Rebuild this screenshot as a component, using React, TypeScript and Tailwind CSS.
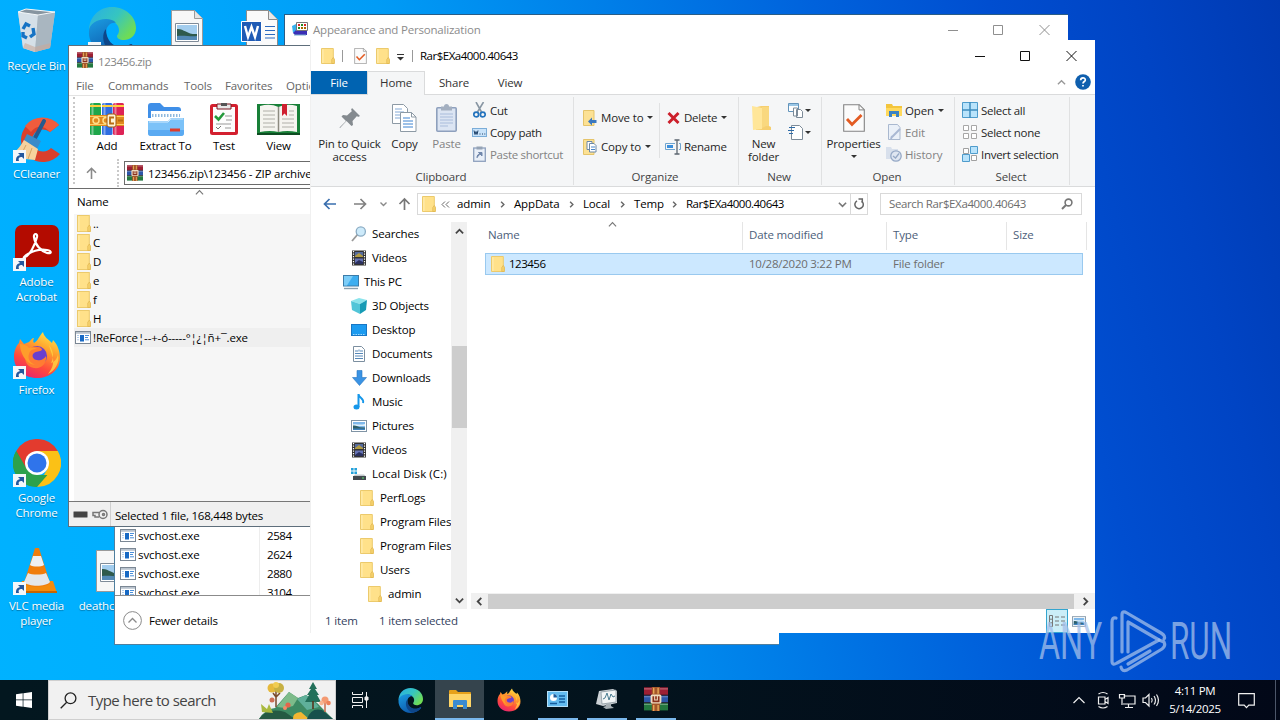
import type { ReactNode } from "react";

/* ---------- Small shared icons ---------- */

function Folder({ className = "w-[14px] h-4" }: { className?: string }) {
  return (
    <svg className={`shrink-0 ${className}`} viewBox="0 0 14 16" preserveAspectRatio="none">
      <path d="M.5.5h11.8v11h.9v4H.5z" fill="#ffe18a" stroke="#ecca6c" />
      <path d="M10.8 11.500l1.500-2 1 1.500v4.500h-2.500z" fill="#f7d470" stroke="#dfb34c" strokeWidth=".7" />
      <path d="M1.300 1.200h1.200v13.800H1.300z" fill="#ffedb0" />
    </svg>
  );
}

function Books({ className }: { className: string }) {
  return (
    <svg className={`shrink-0 ${className}`} viewBox="0 0 16 16">
      <rect width="16" height="5.2" y=".2" fill="#9c1f33" />
      <rect width="16" height="5" y="5.5" fill="#2c56a8" />
      <rect width="16" height="5" y="10.6" fill="#23783f" />
      <path d="M0 1.200h16M0 6.500h16M0 11.600h16" stroke="#fff" strokeOpacity=".3" strokeWidth=".8" />
      <path d="M0 5.400h16M0 10.500h16" stroke="#2b1720" strokeWidth=".6" />
      <rect x="5.2" width="5.4" height="16" fill="#a4562b" />
      <path d="M6.500 .5v4M9.400 .5v4M6.500 12v4M9.400 12v4" stroke="#f2b760" strokeWidth=".8" />
      <rect x="4.4" y="5" width="7.2" height="6" rx="1" fill="#f0dcc0" />
      <path d="M6.200 6.200v3.400h3.600V6.200M8 6.200v2.200" stroke="#8a2f1b" strokeWidth="1.100" fill="none" />
    </svg>
  );
}

function ExeIcon() {
  return (
    <svg className="w-4 h-[13px] shrink-0" viewBox="0 0 16 13">
      <rect x=".5" y=".5" width="15" height="12" fill="#fff" stroke="#7b8794" />
      <path d="M1 1h14v1.800H1z" fill="#b9c3ce" />
      <rect x="5" y="4" width="4" height="6.5" fill="#1769c4" />
      <path d="M10 4.500h4M10 6.500h3M10 8.800h4" stroke="#4b8fd9" />
      <path d="M2 4.500h2M2 6.500h2M2 8.800h2" stroke="#b3cfee" />
    </svg>
  );
}

function PictureIcon({ className = "w-4 h-3" }: { className?: string }) {
  return (
    <svg className={`shrink-0 ${className}`} viewBox="0 0 16 12">
      <rect x=".5" y=".5" width="15" height="11" fill="#fff" stroke="#8094a5" />
      <path d="M2 2h12v8H2z" fill="#7fb8ea" />
      <path d="M2 4.500c3-1 6 1 12-.500v2H2z" fill="#dff0fb" />
      <path d="M2 5.600c3-.600 5 1.200 7 1.600l5 .400V10H2z" fill="#2e5f68" />
      <path d="M2 8.500h12V10H2z" fill="#3f82bd" />
    </svg>
  );
}

function Caret() {
  return (
    <svg className="w-[6px] h-[3px] shrink-0" viewBox="0 0 6 3">
      <path d="M0 0h6L3 3z" fill="#333" />
    </svg>
  );
}

function Chevron({ d, className, color = "#777", width = 1.3 }: { d: string; className: string; color?: string; width?: number }) {
  return (
    <svg className={`shrink-0 ${className}`} viewBox="0 0 10 10" fill="none" stroke={color} strokeWidth={width}>
      <path d={d} />
    </svg>
  );
}

const UP = "M1 7l4-4 4 4";
const DOWN = "M1 3l4 4 4-4";
const LEFT = "M7 1L3 5l4 4";
const RIGHT = "M3 1l4 4-4 4";

/* ---------- App logos ---------- */

function EdgeLogo({ className }: { className: string }) {
  return (
    <svg className={`shrink-0 ${className}`} viewBox="0 0 48 48">
      <defs>
        <linearGradient id="edgeTop" x1="0" y1="0" x2="1" y2=".6">
          <stop offset="0" stopColor="#28aee6" />
          <stop offset=".55" stopColor="#36c5c0" />
          <stop offset="1" stopColor="#6fdc55" />
        </linearGradient>
        <linearGradient id="edgeBody" x1="0" y1="0" x2=".6" y2="1">
          <stop offset="0" stopColor="#1b9de2" />
          <stop offset="1" stopColor="#0c55a8" />
        </linearGradient>
      </defs>
      <path d="M1 24C1 10 11 0 24 0c14 0 24 10 24 21 0 8-6 12-12 12-5 0-7-2-7-4 0-1 2-2 2-6 0-5-5-10-12-10C9 13 2 19 1 24z" fill="url(#edgeTop)" />
      <path d="M1 24c0-7 8-12 17-12 4 0 8 1 10 4-6-1-10 4-10 10 0 8 7 14 15 14 5 0 8-2 10-3 1 0 2 1 1 2-5 6-12 9-20 9C11 48 0 37 1 24z" fill="url(#edgeBody)" />
      <path d="M18 22c-4 4-4 14 2 20 3 4 7 5 9 5 7-1 12-4 15-8 1-1 0-2-1-2-4 2-7 3-10 3-8 0-15-7-15-18z" fill="#0e4689" />
    </svg>
  );
}

function FirefoxLogo({ className }: { className: string }) {
  return (
    <svg className={`shrink-0 ${className}`} viewBox="0 0 48 48">
      <defs>
        <linearGradient id="foxBody" x1=".8" y1="0" x2=".3" y2="1">
          <stop offset="0" stopColor="#ffe94a" />
          <stop offset=".35" stopColor="#ffa02c" />
          <stop offset=".7" stopColor="#ff4a3c" />
          <stop offset="1" stopColor="#e8246f" />
        </linearGradient>
      </defs>
      <path d="M30 1c1 5 5 7 9 11l1-3c5 5 7 12 7 18 0 12-10 20-23 20S1 38 1 26c0-6 2-11 5-14l1-4 4 5 5-2c2-2 3-4 5-4-1 2-1 4 0 5 4-2 5-7 9-11z" fill="url(#foxBody)" />
      <circle cx="24" cy="25" r="10" fill="#6a3fd0" />
      <path d="M14 20c3-4 8-5 11-4 3 0 4 2 4 3-2 2-6 1-8 3-3 2-1 7 3 7 4 1 7-1 9-4 1 8-5 13-12 12-8-1-11-9-7-17z" fill="#ff7c32" />
      <path d="M7 13c3 0 7 1 9 4 3-1 6 0 8 1-4 0-7 1-8 5-2 5 2 10 7 11-9 0-16-11-16-21z" fill="#ff9d2b" />
      <path d="M36 14c5 6 5 13 2 18 3-1 6-4 7-8 2 7-3 16-10 19 4-5 6-10 5-16z" fill="#ffd443" fillOpacity=".8" />
    </svg>
  );
}

function ChromeLogo() {
  return (
    <svg className="w-12 h-12" viewBox="0 0 48 48">
      <path d="M24 24L3.200 12A24 24 0 0 1 44.800 12z" fill="#e33b2e" />
      <path d="M24 24h-6L3.200 12A24 24 0 0 0 24 48z" fill="#2da14c" />
      <path d="M24 12h20.800A24 24 0 0 1 24 48l10.400-18z" fill="#fbc116" />
      <path d="M3.200 12L13.600 30 24 12z" fill="#e33b2e" />
      <path d="M13.600 30L24 36h10.400L24 48A24 24 0 0 1 3.200 12z" fill="#2da14c" />
      <circle cx="24" cy="24" r="12" fill="#fff" />
      <circle cx="24" cy="24" r="9.500" fill="#2f74eb" />
    </svg>
  );
}

function RecycleBin() {
  return (
    <svg className="w-12 h-12" viewBox="0 0 48 48">
      <path d="M5 5l8-3 29 3-5 36-15 4-12-4z" fill="#b7c6d1" />
      <path d="M5 5l20 3-3 37-12-4z" fill="#d5e0e8" />
      <path d="M25 8l17-3-5 36-15 4z" fill="#a9b6c0" />
      <path d="M5 5l8-3 29 3-17 3z" fill="#8795a0" stroke="#f4f8fa" />
      <path d="M12 36l10 4 16-4-1 5-15 4-12-4z" fill="#c9a999" fillOpacity=".6" />
      <g fill="none" stroke="#1673c4" strokeWidth="3.400">
        <path d="M10 22l3-5 4 2" />
        <path d="M20 21l1 6-4 3" />
        <path d="M14 31l-4-2v-4" />
      </g>
    </svg>
  );
}

function CCleanerLogo() {
  return (
    <svg className="w-12 h-12" viewBox="0 0 48 48">
      <path d="M46 10A22 22 0 1 0 47 39l-9-6a11 11 0 1 1-1-16z" fill="#d93f2c" />
      <path d="M46 10A22 22 0 0 0 12 11l6 6c5-7 13-7 19 0z" fill="#f05c3d" />
      <path d="M31 6L22 23" stroke="#255a8e" strokeWidth="4" strokeLinecap="round" />
      <path d="M14 19l14 7-4 8-14-7z" fill="#3a8bc9" />
      <path d="M11 25l14 9-3 11-10-1-12-6c5-3 8-8 11-13z" fill="#f6d29e" />
      <path d="M13 30L8 40M19 33l-4 11" stroke="#d6a463" />
    </svg>
  );
}

function AcrobatLogo() {
  return (
    <svg className="w-12 h-12" viewBox="0 0 48 48">
      <rect x="2" y="2" width="44" height="42" rx="7" fill="#b30b00" />
      <path d="M12 34c5-2 10-12 12-20 .8-4-3.500-4-3 0 1 8 7 14 13 16 5 1 5-2 0-3-6-1-14 1-19 4-5 3-5 5-3 3z" fill="none" stroke="#fff" strokeWidth="2.200" />
    </svg>
  );
}

function VlcLogo() {
  return (
    <svg className="w-12 h-12" viewBox="0 0 48 48">
      <path d="M9 34h31l4 12H6z" fill="#f48b0c" />
      <path d="M6 44h38v2H6z" fill="#c96500" />
      <path d="M22 1h4l11 35c-3 5-23 5-26 0z" fill="#f07d0b" />
      <path d="M20 9h8l3 9c-3 2-11 2-14 0z" fill="#eef0f2" />
      <path d="M15 26c4 2 14 2 18 0l4 9c-4 5-22 5-26 0z" fill="#e4e7ea" />
    </svg>
  );
}

function DocPicture() {
  return (
    <svg className="w-12 h-12" viewBox="0 0 48 48">
      <path d="M8.500 3.500h23l8 8v33h-31z" fill="#f7f7f7" stroke="#9a9a9a" />
      <path d="M31.500 3.500v8h8" fill="#e4e4e4" stroke="#9a9a9a" />
      <path d="M12.500 16.500h23v18h-23z" fill="#fff" stroke="#7f8b98" />
      <path d="M14 18h20v15H14z" fill="#a3cdee" />
      <path d="M14 22c6-1 11 6 20 5v6H14z" fill="#2f5a4c" />
      <path d="M14 29c7-1 14 1 20 0v4H14z" fill="#5389b5" />
    </svg>
  );
}

function WordDoc() {
  return (
    <svg className="w-12 h-12" viewBox="0 0 48 48">
      <path d="M8.500 3.500h22l9 9v33h-31z" fill="#fafafa" stroke="#8b8b8b" />
      <path d="M30.500 3.500v9h9" fill="#e8e8e8" stroke="#8b8b8b" />
      <path d="M27 19.500h10M27 23.500h10M27 27.500h10M27 31h10" stroke="#2c6bc0" />
      <path d="M3.500 14.500h20v20h-20z" fill="#1f5bb5" stroke="#fff" />
      <path d="M7 19l3 11 3.500-10L17 30l3-11" fill="none" stroke="#fff" strokeWidth="2.400" />
    </svg>
  );
}

function ControlPanelIcon() {
  return (
    <svg className="w-4 h-4 shrink-0 mb-[2px]" viewBox="0 0 16 16">
      <path d="M0 5l4-2v8l-3 1z" fill="#37b1ee" />
      <path d="M1 12l4-4h10v6H3z" fill="#3a2fb5" />
      <path d="M4.500 1.500h11v8h-11z" fill="#fff" stroke="#777" />
      <path d="M6 3h2v2H6zM12 3h2v2h-2z" fill="#d22" />
      <path d="M9 3h2v2H9zM6 6h2v2H6z" fill="#282" />
      <path d="M9 6h2v2H9zM12 6h2v2h-2z" fill="#a60" />
      <path d="M2 14h12" stroke="#7ac" />
    </svg>
  );
}

/* ---------- Desktop ---------- */

function DesktopItem({ icon, label, shortcut }: { icon?: ReactNode; label?: string; shortcut?: boolean }) {
  return (
    <div className="h-[108px] w-[75px] pt-[7px] flex flex-col items-center">
      <div className="relative w-12 h-12">
        {icon}
        {shortcut && (
          <svg className="absolute left-0 bottom-0 w-[13px] h-[13px]" viewBox="0 0 13 13">
            <rect width="13" height="13" fill="#f4f7fa" />
            <path d="M3 11c0-4 1-5 4-6L5 3h6v6L9 7c-3 0-4 1-3 4z" fill="#24589e" />
          </svg>
        )}
      </div>
      <div className="mt-[3px] w-[68px] text-center text-white leading-[15px] whitespace-pre [text-shadow:0_1px_1px_rgba(0,0,0,0.35)] flex flex-col items-center">
        {label?.split("\n").map((line) => <span key={line}>{line}</span>)}
      </div>
    </div>
  );
}

function DesktopIcons() {
  return (
    <div className="absolute -left-px top-0 flex">
      <div>
        <DesktopItem icon={<RecycleBin />} label="Recycle Bin" />
        <DesktopItem icon={<CCleanerLogo />} label="CCleaner" shortcut />
        <DesktopItem icon={<AcrobatLogo />} label={"Adobe\nAcrobat"} shortcut />
        <DesktopItem icon={<FirefoxLogo className="w-12 h-12" />} label="Firefox" shortcut />
        <DesktopItem icon={<ChromeLogo />} label={"Google\nChrome"} shortcut />
        <DesktopItem icon={<VlcLogo />} label={"VLC media\nplayer"} shortcut />
      </div>
      <div>
        <DesktopItem icon={<EdgeLogo className="w-12 h-12" />} shortcut />
        <DesktopItem />
        <DesktopItem />
        <DesktopItem />
        <DesktopItem />
        <DesktopItem icon={<DocPicture />} label="deathcourse" />
      </div>
      <DesktopItem icon={<DocPicture />} />
      <DesktopItem icon={<WordDoc />} />
    </div>
  );
}

function WindowButtons({ color }: { color: string }) {
  return (
    <svg className="w-[138px] h-[30px] shrink-0" viewBox="0 0 138 30" fill="none" stroke={color}>
      <path d="M18 15.500h10M63.500 10.500h9v9h-9zM109.500 10l10 10M119.500 10l-10 10" />
    </svg>
  );
}

/* ---------- Background windows ---------- */

function PersonalizationWindow() {
  return (
    <div className="absolute left-[284px] top-[14px] w-[784px] h-[500px] bg-white border-t border-l border-[#2a5d86]">
      <div className="flex items-center h-[29px] pl-[7px]">
        <ControlPanelIcon />
        <span className="ml-[5px] flex-1 text-[#8c8c8c] tracking-[-0.19px]">Appearance and Personalization</span>
        <WindowButtons color="#8f8f8f" />
      </div>
    </div>
  );
}

const processes = ["2584", "2624", "2880", "3104"];

function TaskManagerWindow() {
  return (
    <div className="absolute left-[114px] top-[400px] w-[665px] h-[245px] bg-white border-l border-b border-[#4f7f9f] flex flex-col">
      <div className="h-[195px] pt-[126px] overflow-hidden">
        {processes.map((pid) => (
          <div key={pid} className="flex items-center h-[19px] pl-[5px]">
            <ExeIcon />
            <span className="ml-[2px] w-[122px] h-full leading-[19px] border-r border-[#ededed] tracking-[-0.05px]">svchost.exe</span>
            <span className="ml-[7px] tracking-[-0.4px]">{pid}</span>
          </div>
        ))}
      </div>
      <div className="flex-1 flex items-center border-t border-[#8b8b8b] pl-2">
        <svg className="w-[19px] h-[19px]" viewBox="0 0 19 19" fill="none">
          <circle cx="9.500" cy="9.500" r="8.900" stroke="#8a8a8a" />
          <path d="M5.500 11.500l4-4 4 4" stroke="#8a8a8a" strokeWidth="1.300" />
        </svg>
        <span className="ml-[7px]">Fewer details</span>
      </div>
    </div>
  );
}

/* ---------- WinRAR ---------- */

const archiveTools = [
  {
    label: "Add",
    width: "w-[58px]",
    icon: (
      <svg className="w-[34px] h-[34px]" viewBox="0 0 34 34">
        <rect y="1" width="11" height="32" rx="1.500" fill="#1ea64a" />
        <rect x="12" y="1" width="10.500" height="32" rx="1.500" fill="#2f6de0" />
        <rect x="23" y="1" width="11" height="32" rx="1.500" fill="#dd2356" />
        <path d="M2.500 1v32M14.500 1v32M25.500 1v32" stroke="#fff" strokeOpacity=".4" strokeWidth="2" />
        <path d="M0 4h11M12 4h10.500M23 4h11" stroke="#ffcf3d" strokeWidth="2" />
        <rect y="13" width="34" height="11" fill="#e08a1f" />
        <path d="M0 14.500h34M0 22.500h34" stroke="#ffd169" />
        <circle cx="6" cy="18.500" r="3" fill="none" stroke="#ffdf8c" strokeWidth="1.500" />
        <circle cx="16" cy="18.500" r="3" fill="none" stroke="#ffdf8c" strokeWidth="1.500" />
        <rect x="17" y="12" width="9" height="13" rx="2" fill="#fff4d6" stroke="#a15d12" />
        <path d="M24 15.500h-4v6h4M28 18.500h5" fill="none" stroke="#b86c12" strokeWidth="1.800" />
      </svg>
    ),
  },
  {
    label: "Extract To",
    width: "w-[59px]",
    icon: (
      <svg className="w-9 h-[34px]" viewBox="0 0 36 34">
        <path d="M0 4q0-3 3-3h9l4 4h14q3 0 3 3v8H0z" fill="#3f8fe8" />
        <rect x="3" y="9" width="30" height="13" fill="#fff" />
        <path d="M4 13.500h28" stroke="#90b9dd" strokeDasharray="1.500 1.500" strokeWidth="3" />
        <path d="M0 19h20l3-3h13v15q0 3-3 3H3q-3 0-3-3z" fill="#7cc2f8" />
        <path d="M0 28h36v3q0 3-3 3H3q-3 0-3-3z" fill="#5aaaf2" />
        <path d="M1 20h19l3-3h12" fill="none" stroke="#cfe9fd" />
        <rect x="22" y="26.500" width="10" height="3" fill="#dd3b2a" />
      </svg>
    ),
  },
  {
    label: "Test",
    width: "w-[58px]",
    icon: (
      <svg className="w-7 h-[34px]" viewBox="0 0 28 34">
        <rect y="2" width="28" height="31" rx="2.500" fill="#d3202f" />
        <path d="M3 5h22v25H3z" fill="#fdfdfd" />
        <path d="M7 2h14v5H7z" fill="#e8e8e8" stroke="#7b1620" />
        <path d="M11 1h6v3h-6z" fill="#555" />
        <path d="M5 14l3.500 3.500L14 11" fill="none" stroke="#249a3c" strokeWidth="2.600" />
        <path d="M15 14h7M16 18h6M6 22h15M15 26h6" stroke="#999" />
        <path d="M6 25l2 2 3-3" stroke="#777" fill="none" />
      </svg>
    ),
  },
  {
    label: "View",
    width: "w-[51px]",
    icon: (
      <svg className="w-[43px] h-[34px]" viewBox="0 0 43 34">
        <path d="M0 2h43v31H0z" fill="#188038" />
        <path d="M0 31h43v2H0z" fill="#0e4c22" />
        <path d="M3 4q10-3 18.500 1Q30 1 40 4v26q-10-2-18.500 0Q13 28 3 30z" fill="#f5f4ef" />
        <path d="M21.500 5v25" stroke="#8d8b80" strokeWidth="1.500" />
        <path d="M6 9h12M6 13h12M6 17h12M6 21h12M6 25h12M25 17h12M25 21h12M25 25h12M32 9h5M32 13h5" stroke="#b0afa8" />
        <path d="M25 2h5v12l-2.500-2.500L25 14z" fill="#cf2030" />
      </svg>
    ),
  },
];

const archiveRows = ["..", "C", "D", "e", "f", "H"];

function WinRarWindow() {
  return (
    <div className="absolute left-[68px] top-[45px] w-[400px] h-[482px] bg-white border border-[#5e6e7b] flex flex-col">
      <div className="flex items-center h-[30px] pl-2">
        <Books className="w-4 h-4 mb-[3px]" />
        <span className="ml-[5px] text-[#868686] tracking-[-0.45px]">123456.zip</span>
      </div>
      <div className="flex h-[20px] pl-[7px] items-center text-[#666] border-b border-[#e3e3e3] whitespace-nowrap">
        <span className="w-8">File</span>
        <span className="w-[76px]">Commands</span>
        <span className="w-[41px]">Tools</span>
        <span className="w-[61px]">Favorites</span>
        <span>Options</span>
      </div>
      <div className="flex h-[93px] pl-1 border-b border-[#6d6d6d]">
        <div className="border-l-2 border-dotted border-[#c9c9c9] mt-px mb-1" />
        <div className="flex flex-col">
          <div className="flex h-[63px] pl-[3px] pt-[6px]">
            {archiveTools.map((tool) => (
              <div key={tool.label} className={`flex flex-col items-center ${tool.width}`}>
                {tool.icon}
                <span className="mt-[2px] leading-[15px] whitespace-nowrap">{tool.label}</span>
              </div>
            ))}
          </div>
          <div className="flex h-[28px]">
            <div className="w-[42px] flex items-center justify-center pr-[10px]">
              <svg className="w-[11px] h-3" viewBox="0 0 11 12" fill="none" stroke="#8a8a8a" strokeWidth="1.600">
                <path d="M5.500 12V1.500M1 5.800l4.500-4.500L10 5.800" />
              </svg>
            </div>
            <div className="border-l-2 border-dotted border-[#c9c9c9]" />
            <div className="ml-[5px] mt-[2px] w-[260px] h-[24px] border border-[#6b6b6b] flex items-center pl-[2px] whitespace-nowrap">
              <Books className="w-4 h-4" />
              <span className="ml-[5px] tracking-[-0.2px]">123456.zip\123456 - ZIP archive</span>
            </div>
          </div>
        </div>
      </div>
      <div className="flex h-[25px] pl-2 items-center">
        <span>Name</span>
        <Chevron d={UP} className="w-[9px] h-[9px] ml-[86px] mb-[18px]" />
      </div>
      <div className="flex-1 bg-[#f6f6f6] ml-[5px]">
        {archiveRows.map((name) => (
          <div key={name} className="flex items-center h-[19px] pl-[3px]">
            <Folder className="w-[14px] h-[17px]" />
            <span className="ml-[2px]">{name}</span>
          </div>
        ))}
        <div className="flex items-center h-[19px] pl-[1px] bg-[#efefef]">
          <ExeIcon />
          <span className="ml-[2px]">!ReForce¦--+-ó-----°¦¿¦ñ+¯.exe</span>
        </div>
      </div>
      <div className="h-[25px] bg-[#f0f0f0] border-t border-[#777] flex items-center pl-1">
        <svg className="w-[15px] h-[7px]" viewBox="0 0 15 7">
          <rect x=".500" y=".500" width="14" height="6" rx="1" fill="#444" stroke="#999" />
        </svg>
        <svg className="ml-[4px] w-4 h-[11px]" viewBox="0 0 16 11" fill="none" stroke="#777" strokeWidth="1.500">
          <circle cx="11" cy="5.500" r="4" />
          <circle cx="11.500" cy="5.500" r="1" />
          <path d="M7 3.500H1v3h2v1.500h4" />
        </svg>
        <div className="ml-[2px] w-px h-full bg-[#d0d0d0]" />
        <span className="ml-[4px] pt-[3px] tracking-[-0.2px]">Selected 1 file, 168,448 bytes</span>
      </div>
    </div>
  );
}

/* ---------- Explorer ribbon ---------- */

function PropertySheet({ className }: { className: string }) {
  return (
    <svg className={`shrink-0 ${className}`} viewBox="0 0 22 28">
      <path d="M.7.700h15.600l5 5v21.600H.7z" fill="#fbfbfb" stroke="#838383" strokeWidth="1.100" />
      <path d="M16 .7v5.200h5.300" fill="none" stroke="#838383" />
      <path d="M4 15l5 5.500L18.500 11" fill="none" stroke="#e35b22" strokeWidth="2.800" />
    </svg>
  );
}

function CommandRow({ icon, label, muted, caret, className = "h-[22px]" }: { icon: ReactNode; label: string; muted?: boolean; caret?: boolean; className?: string }) {
  return (
    <div className={`flex items-center whitespace-nowrap ${className}`}>
      <span className="w-4 flex justify-center shrink-0">{icon}</span>
      <span className={`ml-[3px] ${muted ? "text-[#838383]" : "text-[#262626]"}`}>{label}</span>
      {caret && <span className="ml-[4px]"><Caret /></span>}
    </div>
  );
}

function BigCommand({ icon, lines, muted, className, caret }: { icon: ReactNode; lines: string[]; muted?: boolean; className: string; caret?: boolean }) {
  return (
    <div className={`flex flex-col items-center shrink-0 whitespace-nowrap ${muted ? "text-[#838383]" : "text-[#262626]"} ${className}`}>
      <div className="h-10 flex items-center justify-center pt-[2px]">{icon}</div>
      {lines.map((line) => <span key={line} className="leading-[13px]">{line}</span>)}
      {caret && <div className="mt-[5px]"><Caret /></div>}
    </div>
  );
}

function RibbonGroup({ title, className, children }: { title: string; className: string; children: ReactNode }) {
  return (
    <div className={`h-[88px] mt-[2px] border-r border-[#e0e1e2] flex flex-col ${className}`}>
      <div className="flex h-[73px]">{children}</div>
      <div className="h-[15px] leading-[13px] text-center text-[#444] pr-[2px]">{title}</div>
    </div>
  );
}

function Ribbon() {
  return (
    <div className="flex h-[93px] bg-[#f5f6f7] border-y border-[#dadbdc] shrink-0">
      <RibbonGroup title="Clipboard" className="w-[263px]">
        <BigCommand
          className="w-[77px]"
          lines={["Pin to Quick", "access"]}
          icon={
            <svg className="w-[22px] h-[22px]" viewBox="0 0 22 22">
              <path d="M13 1l8 8-2 1-1-1-4.500 5 .5 4-1.500 1-5-5L1 21l-.500-.500L7 14 2.500 9.500 4 8l4 .500 5-4.500-1-1z" fill="#848a8f" />
            </svg>
          }
        />
        <BigCommand
          className="w-[33px]"
          lines={["Copy"]}
          icon={
            <svg className="w-[25px] h-7" viewBox="0 0 25 28">
              <path d="M.500.500h11l4 4v15h-15z" fill="#fff" stroke="#8d9aa5" />
              <path d="M3 5h7M3 8h9M3 11h6M3 14h6" stroke="#83a9d6" />
              <path d="M8.500 8.500h11l4.500 4.500v14.500H8.500z" fill="#fff" stroke="#8d9aa5" />
              <path d="M19.500 8.500V13H24" fill="none" stroke="#8d9aa5" />
              <path d="M11 14h7M11 17h10M11 20h10M11 23h10" stroke="#3c83d1" />
            </svg>
          }
        />
        <BigCommand
          className="w-[51px]"
          muted
          lines={["Paste"]}
          icon={
            <svg className="w-[21px] h-7" viewBox="0 0 21 28">
              <rect x=".800" y="3.800" width="19.400" height="23.400" rx="1" fill="#dce5f3" stroke="#8ea0bd" strokeWidth="1.600" />
              <path d="M5 2.500h3a2.500 2.500 0 0 1 5 0h3v4H5z" fill="#a3afc0" />
              <path d="M4 10h13M4 13h13M4 16h13M4 19h13M4 22h8" stroke="#a9bcdb" />
            </svg>
          }
        />
        <div className="pt-[2px] -ml-px tracking-[-0.3px]">
          <CommandRow
            label="Cut"
            icon={
              <svg className="w-[13px] h-4" viewBox="0 0 13 16" fill="none">
                <path d="M3 0l5.500 10M10.500 0L4.500 10" stroke="#8896a3" strokeWidth="1.600" />
                <circle cx="3.200" cy="12.500" r="2.400" stroke="#2473bd" strokeWidth="1.700" />
                <circle cx="9.800" cy="12.500" r="2.400" stroke="#2473bd" strokeWidth="1.700" />
              </svg>
            }
          />
          <CommandRow
            label="Copy path"
            icon={
              <svg className="w-[15px] h-[9px]" viewBox="0 0 15 9">
                <rect x=".500" y=".500" width="14" height="8" fill="#c9e3fa" stroke="#7badd8" />
                <path d="M2 2.500l1 4 1-3 1 3 1-4M7.500 6h1M10 6h1M12.300 6h1" stroke="#1d3f66" fill="none" />
              </svg>
            }
          />
          <CommandRow
            label="Paste shortcut"
            muted
            icon={
              <svg className="w-[13px] h-4" viewBox="0 0 13 16">
                <rect x=".700" y="2" width="11.600" height="13.300" fill="#e9eff8" stroke="#8ea0bd" strokeWidth="1.300" />
                <rect x="3.500" y=".500" width="6" height="3" fill="#95a3b5" />
                <path d="M4 12c0-3 1-4 3.500-4M5.500 6.500H9V10z" fill="#7187ab" stroke="#7187ab" />
              </svg>
            }
          />
        </div>
      </RibbonGroup>

      <RibbonGroup title="Organize" className="w-[165px]">
        <div className="w-[85px] pl-2 pt-[6px]">
          <CommandRow
            className="h-[29px]"
            label="Move to"
            caret
            icon={
              <svg className="w-[14px] h-4" viewBox="0 0 14 16">
                <path d="M.500.500h10.500v15H.5z" fill="#fce194" stroke="#e5c46b" />
                <path d="M5 11.500l4-4v2.500h4.500v3H9v2.500z" fill="#3c78bf" />
              </svg>
            }
          />
          <CommandRow
            className="h-[29px]"
            label="Copy to"
            caret
            icon={
              <svg className="w-[14px] h-4" viewBox="0 0 14 16">
                <path d="M.500.500h10.500v15H.5z" fill="#fce194" stroke="#e5c46b" />
                <path d="M4 2.500h5v8H4z" fill="#fff" stroke="#6c88a6" />
                <path d="M6.500 4.500H11l2 2v6.500H6.500z" fill="#fff" stroke="#6c88a6" />
                <path d="M8 8h4M8 10.500h4" stroke="#4a85c7" />
              </svg>
            }
          />
        </div>
        <div className="w-px mt-[6px] mb-3 bg-[#e0e1e2]" />
        <div className="pl-[5px] pt-[6px] tracking-[-0.25px]">
          <CommandRow
            className="h-[29px]"
            label="Delete"
            caret
            icon={
              <svg className="w-[13px] h-3" viewBox="0 0 13 12">
                <path d="M1.500 1l10 10M11.500 1l-10 10" stroke="#cc1f2b" strokeWidth="2.900" />
              </svg>
            }
          />
          <CommandRow
            className="h-[29px]"
            label="Rename"
            icon={
              <svg className="w-4 h-4" viewBox="0 0 16 16" fill="none">
                <path d="M10 4.500H.500v6H10M14 4.500h1.500v6H14" stroke="#6fa4cf" />
                <path d="M2 6h6v3H2z" fill="#3a8fdd" />
                <path d="M9.500 1h5M12 1v14M9.500 15h5" stroke="#5b6670" strokeWidth="1.300" />
              </svg>
            }
          />
        </div>
      </RibbonGroup>

      <RibbonGroup title="New" className="w-[83px]">
        <BigCommand
          className="w-[49px]"
          lines={["New", "folder"]}
          icon={
            <svg className="w-[19px] h-7 -ml-1" viewBox="0 0 19 28">
              <path d="M1 4l8-2h8v20l2 1v3H4z" fill="#f6cf70" />
              <path d="M0 2l10 2v21L1 26z" fill="#ffe699" />
              <path d="M10 3h7v19h-3l-4 2z" fill="#f9d87f" />
            </svg>
          }
        />
        <div className="pt-[2px]">
          <div className="flex items-center h-[22px]">
            <svg className="w-4 h-4" viewBox="0 0 16 16" fill="#fff">
              <path d="M.500 1.500h10v8h-10z" stroke="#6394bb" />
              <path d="M1 2h9v2H1z" fill="#9bc7e6" />
              <path d="M5.500 6h4v8h-4zM8.500 7.500h4l2 2v6h-6z" stroke="#7d8b98" />
            </svg>
            <span className="ml-px"><Caret /></span>
          </div>
          <div className="flex items-center h-[22px]">
            <svg className="w-4 h-4" viewBox="0 0 16 16" fill="#fff">
              <path d="M3.500 1.500h8l3 3v11h-11z" stroke="#7d8b98" />
              <path d="M1 3.500h6M0 6.500h6M1 9.500h4" stroke="#2f6ca8" />
            </svg>
            <span className="ml-px"><Caret /></span>
          </div>
        </div>
      </RibbonGroup>

      <RibbonGroup title="Open" className="w-[133px]">
        <BigCommand className="w-[64px] pr-px" caret lines={["Properties"]} icon={<PropertySheet className="w-[22px] h-7" />} />
        <div className="pt-[2px]">
          <CommandRow
            label="Open"
            caret
            icon={
              <svg className="w-4 h-[14px]" viewBox="0 0 16 14">
                <path d="M0 1h6l1 2h9v10H0z" fill="#f3c53d" />
                <path d="M0 5h16v8H0z" fill="#ffd95c" />
                <path d="M3 14V8h10v6h-3v-3H6v3z" fill="#3a82c4" />
              </svg>
            }
          />
          <CommandRow
            label="Edit"
            muted
            icon={
              <svg className="w-[13px] h-4" viewBox="0 0 13 16">
                <path d="M.500.500h9l2.500 3v12H.5z" fill="#eaf0f8" stroke="#a9b8cf" />
                <path d="M4 13L12 5M3 15l1-3" stroke="#a9b8d3" strokeWidth="2" />
              </svg>
            }
          />
          <CommandRow
            label="History"
            muted
            icon={
              <svg className="w-4 h-4" viewBox="0 0 16 16">
                <path d="M0 1h5l1 2h6v10H0z" fill="#d8e0ec" />
                <circle cx="10" cy="10" r="5.200" fill="#dfe6f1" stroke="#96a9c6" strokeWidth="1.300" />
                <path d="M7 10l2.500 2L13 7.500" stroke="#96a9c6" fill="none" strokeWidth="1.300" />
              </svg>
            }
          />
        </div>
      </RibbonGroup>

      <RibbonGroup title="Select" className="w-[115px]">
        <div className="pt-[2px] pl-[7px] tracking-[-0.28px]">
          <CommandRow
            label="Select all"
            icon={
              <svg className="w-4 h-4" viewBox="0 0 16 16">
                <path d="M.500.500h15v15H.5z" fill="#b9e3fb" stroke="#4f9ccc" />
                <path d="M8 0v16M0 8h16" stroke="#3f8dbf" strokeWidth="1.500" />
              </svg>
            }
          />
          <CommandRow
            label="Select none"
            icon={
              <svg className="w-[14px] h-[14px]" viewBox="0 0 14 14" fill="#fff" stroke="#a7a7a7">
                <path d="M.500.500h5v5h-5zM8.500.500h5v5h-5zM.500 8.500h5v5h-5zM8.500 8.500h5v5h-5z" />
              </svg>
            }
          />
          <CommandRow
            label="Invert selection"
            icon={
              <svg className="w-4 h-4" viewBox="0 0 16 16">
                <path d="M1.500 2.500h5v5h-5zM9.500 9.500h5v5h-5z" fill="#fff" stroke="#a0a0a0" />
                <path d="M8.500.500h7v7h-7zM.500 8.500h7v7h-7z" fill="#b9e3fb" stroke="#4f9ccc" />
              </svg>
            }
          />
        </div>
      </RibbonGroup>
    </div>
  );
}

/* ---------- Explorer body ---------- */

const navIcons: Record<string, ReactNode> = {
  search: (
    <svg className="w-4 h-4" viewBox="0 0 16 16">
      <path d="M1 15l6-7" stroke="#999" strokeWidth="1.800" />
      <circle cx="9.800" cy="5.500" r="4.600" fill="#cdeafa" stroke="#8bacc4" strokeWidth="1.300" />
    </svg>
  ),
  video: (
    <svg className="w-4 h-4" viewBox="0 0 16 16">
      <rect x="1" y=".500" width="14" height="15" fill="#333" />
      <path d="M2.500 1v15M13.500 1v15" stroke="#fff" strokeWidth="1.200" strokeDasharray="1.200 1.300" />
      <rect x="4" y="2" width="8" height="5" fill="#556b9e" />
      <rect x="4" y="8.500" width="8" height="5.500" fill="#6673b5" />
      <path d="M4 6l4-3 4 3v1H4z" fill="#b19b42" />
      <path d="M4 13l4-3 4 2v2H4z" fill="#2b305e" />
    </svg>
  ),
  pc: (
    <svg className="w-4 h-[15px]" viewBox="0 0 16 15">
      <rect x=".500" y=".500" width="15" height="10.500" fill="#3daef0" stroke="#3c7ca8" />
      <path d="M1 1h9L4 10.500H1z" fill="#7ccdf8" />
      <path d="M1 13.500h14" stroke="#8aa0ae" strokeWidth="1.400" />
    </svg>
  ),
  cube: (
    <svg className="w-4 h-4" viewBox="0 0 16 16">
      <path d="M0 3l8-3 8 2-7 4z" fill="#8be4ec" />
      <path d="M0 3l9 3v10l-8-4z" fill="#52c5d8" />
      <path d="M16 2L9 6v10l6-4z" fill="#169bb5" />
    </svg>
  ),
  desktop: (
    <svg className="w-4 h-3" viewBox="0 0 16 12">
      <rect x=".500" y=".500" width="15" height="11" fill="#1c9bf0" stroke="#1876c4" />
      <path d="M2 10.500h12" stroke="#9fd7fb" strokeDasharray="1.500 1" />
    </svg>
  ),
  doc: (
    <svg className="w-3 h-4" viewBox="0 0 12 16">
      <path d="M.500.500h8l3 3v12H.5z" fill="#fff" stroke="#7c8fa0" />
      <path d="M2 5h3M2 7.500h8M2 10h8M2 12.500h8M6 3.500v2M7 5h3" stroke="#5688b8" />
    </svg>
  ),
  download: (
    <svg className="w-[15px] h-4" viewBox="0 0 15 16">
      <path d="M5 .500h5v7h4.500l-7 8-7-8H5z" fill="#3a93e4" stroke="#2a76bf" strokeWidth=".600" />
    </svg>
  ),
  music: (
    <svg className="w-3 h-4" viewBox="0 0 12 16">
      <path d="M5.500 0v13M5.500 0c0 4 6 4 4.500 9" fill="none" stroke="#1697ea" strokeWidth="2" />
      <ellipse cx="3.500" cy="13" rx="3" ry="2.500" fill="#1697ea" />
    </svg>
  ),
  picture: <PictureIcon />,
  disk: (
    <svg className="w-4 h-3" viewBox="0 0 16 12">
      <path d="M0 0h2.600v2.600H0zM3.400 0H6v2.600H3.400zM0 3.400h2.600V6H0zM3.400 3.400H6V6H3.400z" fill="#24a1da" />
      <path d="M4 6.500h9l2 2H2z" fill="#c2c7cb" />
      <path d="M2 8h13v4H2z" fill="#42494f" />
      <path d="M11 10h2" stroke="#5be16b" />
    </svg>
  ),
  folder: <Folder />,
};

const navItems = [
  { icon: "search", label: "Searches", pad: "pl-[40px]" },
  { icon: "video", label: "Videos", pad: "pl-[40px]" },
  { icon: "pc", label: "This PC", pad: "pl-[32px]" },
  { icon: "cube", label: "3D Objects", pad: "pl-[40px]" },
  { icon: "desktop", label: "Desktop", pad: "pl-[40px]" },
  { icon: "doc", label: "Documents", pad: "pl-[40px]" },
  { icon: "download", label: "Downloads", pad: "pl-[40px]" },
  { icon: "music", label: "Music", pad: "pl-[40px]" },
  { icon: "picture", label: "Pictures", pad: "pl-[40px]" },
  { icon: "video", label: "Videos", pad: "pl-[40px]" },
  { icon: "disk", label: "Local Disk (C:)", pad: "pl-[40px] tracking-[0.08px]" },
  { icon: "folder", label: "PerfLogs", pad: "pl-[48px]" },
  { icon: "folder", label: "Program Files", pad: "pl-[48px]" },
  { icon: "folder", label: "Program Files (x86)", pad: "pl-[48px]" },
  { icon: "folder", label: "Users", pad: "pl-[48px]" },
  { icon: "folder", label: "admin", pad: "pl-[56px]" },
];

const crumbs = [
  { label: "admin", width: "w-[57px]" },
  { label: "AppData", width: "w-[69px]" },
  { label: "Local", width: "w-[51px]" },
  { label: "Temp", width: "w-[52px]" },
];

function AddressRow() {
  return (
    <div className="flex h-[35px] pt-[6px] pl-3 shrink-0">
      <div className="flex items-center h-[22px] w-[94px]">
        <svg className="w-[88px] h-[14px]" viewBox="0 0 88 14" fill="none" strokeWidth="1.700">
          <path d="M13 7H1.500M6.500 2l-5 5 5 5" stroke="#3a6fae" />
          <path d="M31 7h11.500M37.500 2l5 5-5 5" stroke="#808080" />
          <path d="M57.500 5.500l3 3 3-3" stroke="#8a8a8a" strokeWidth="1.400" />
          <path d="M81.500 13V2M76.500 7l5-5 5 5" stroke="#777" />
        </svg>
      </div>
      <div className="flex items-center h-[22px] w-[451px] border border-[#d9d9d9] whitespace-nowrap">
        <Folder className="w-[14px] h-4 ml-1" />
        <svg className="w-[9px] h-[7px] ml-[5px] mr-[7px]" viewBox="0 0 9 7" fill="none" stroke="#666">
          <path d="M4 .500l-3 3 3 3M8 .500l-3 3 3 3" />
        </svg>
        {crumbs.map((crumb) => (
          <span key={crumb.label} className={`flex items-center justify-between ${crumb.width}`}>
            <span className="pb-[2px]">{crumb.label}</span>
            <Chevron d={RIGHT} className="w-[7px] h-[7px] mr-2" color="#666" width={2} />
          </span>
        ))}
        <span className="flex-1 pb-[2px] tracking-[-0.5px]">Rar$EXa4000.40643</span>
        <Chevron d={DOWN} className="w-[9px] h-[9px] mr-[3px]" color="#777" width={1.8} />
        <span className="w-px h-full bg-[#d9d9d9]" />
        <svg className="w-[10px] h-3 mx-[3px]" viewBox="0 0 10 12" fill="none" stroke="#666" strokeWidth="1.500">
          <path d="M7.500 3A4.200 4.200 0 1 1 3 2.800M4.500 1h3.800v4" />
        </svg>
      </div>
      <div className="ml-3 flex items-center justify-between h-[22px] w-[202px] border border-[#d9d9d9] pl-2 pr-2">
        <span className="text-[#6d6d6d] pb-[2px] tracking-[-0.37px]">Search Rar$EXa4000.40643</span>
        <svg className="w-3 h-3" viewBox="0 0 12 12" fill="none" stroke="#777">
          <circle cx="7.500" cy="4.500" r="3.400" strokeWidth="1.600" />
          <path d="M5 7L1 11" strokeWidth="2" />
        </svg>
      </div>
    </div>
  );
}

function FileList() {
  return (
    <div className="flex-1 flex flex-col pl-[4px]">
      <div className="flex h-[28px] items-stretch text-[#4c607a] leading-[26px] pr-2">
        <span className="w-[272px] pl-[17px] border-r border-[#e5e5e5] flex">
          <span className="w-[120px]">Name</span>
          <Chevron d={UP} className="w-[9px] h-[9px] -mt-[2px]" color="#777" />
        </span>
        <span className="w-[144px] pl-[6px] border-r border-[#e5e5e5]">Date modified</span>
        <span className="w-[120px] pl-[6px] border-r border-[#e5e5e5]">Type</span>
        <span className="w-[80px] pl-[6px] border-r border-[#e5e5e5]">Size</span>
      </div>
      <div className="mt-[3px] ml-[14px] w-[598px] h-[22px] bg-[#cce8ff] border border-[#99c9ef] flex items-center text-[#6d6d6d]">
        <Folder className="w-[14px] h-4 ml-[5px]" />
        <span className="ml-[4px] w-[240px] pb-[2px] text-black tracking-[-0.5px]">123456</span>
        <span className="w-[144px] pb-[2px] tracking-[-0.25px]">10/28/2020 3:22 PM</span>
        <span className="pb-[2px]">File folder</span>
      </div>
      <div className="flex-1" />
      <div className="h-4 flex items-center bg-[#f0f0f0]">
        <span className="w-[17px] flex justify-center"><Chevron d={LEFT} className="w-[9px] h-[9px]" color="#444" width={2} /></span>
        <span className="w-[586px] h-[15px] bg-[#cdcdcd]" />
        <span className="flex-1 flex justify-center pl-[2px]"><Chevron d={RIGHT} className="w-[9px] h-[9px]" color="#444" width={2} /></span>
      </div>
    </div>
  );
}

function ExplorerWindow() {
  return (
    <div className="absolute left-[310px] top-[40px] w-[785px] h-[593px] bg-white border-l border-[#f0f0f0] flex flex-col">
      <div className="flex items-center h-[31px] shrink-0 pl-[10px]">
        <Folder className="w-[14px] h-4" />
        <span className="w-px h-3 bg-[#999] ml-[7px] mr-[11px]" />
        <PropertySheet className="w-[13px] h-4" />
        <Folder className="w-[14px] h-4 ml-[9px]" />
        <svg className="w-[7px] h-[7px] ml-[7px] mt-[3px]" viewBox="0 0 7 7">
          <path d="M0 .500h7" stroke="#333" />
          <path d="M0 3h7L3.500 6.500z" fill="#333" />
        </svg>
        <span className="w-px h-3 bg-[#999] ml-[8px] mr-[7px]" />
        <span className="flex-1 tracking-[-0.5px]">Rar$EXa4000.40643</span>
        <WindowButtons color="#111" />
      </div>
      <div className="flex h-[23px] shrink-0 leading-[24px] text-center text-[#333]">
        <span className="w-[56px] bg-[#0063b1] text-white">File</span>
        <span className="w-[58px] h-[24px] bg-[#f5f6f7] border border-b-0 border-[#dadbdc] leading-[22px] z-10">Home</span>
        <span className="w-[58px]">Share</span>
        <span className="w-[54px]">View</span>
        <span className="flex-1" />
        <Chevron d={UP} className="w-[9px] h-[9px] mt-[7px] mr-[9px]" color="#999" width={1.5} />
        <svg className="w-4 h-4 mt-[3px] mr-[4px]" viewBox="0 0 16 16">
          <circle cx="8" cy="8" r="7.800" fill="#0f5fae" />
          <path d="M5.700 6.200c0-3 4.600-3 4.600-.3 0 1.600-2.300 1.700-2.300 3.600M8 11v1.600" fill="none" stroke="#fff" strokeWidth="1.700" />
        </svg>
      </div>
      <Ribbon />
      <AddressRow />
      <div className="flex h-[387px] shrink-0">
        <div className="w-[140px] overflow-hidden">
          {navItems.map((item, i) => (
            <div key={i} className={`flex items-center h-[24px] whitespace-nowrap ${item.pad}`}>
              <span className="w-4 flex justify-center shrink-0">{navIcons[item.icon]}</span>
              <span className="ml-[5px] pb-[2px]">{item.label}</span>
            </div>
          ))}
        </div>
        <div className="w-4 bg-[#f0f0f0] flex flex-col items-center">
          <Chevron d={UP} className="w-[9px] h-[9px] mt-[5px]" color="#444" width={2} />
          <span className="mt-[110px] h-[82px] w-[15px] bg-[#cdcdcd]" />
          <span className="flex-1" />
          <Chevron d={DOWN} className="w-[9px] h-[9px] mb-[4px]" color="#444" width={2} />
        </div>
        <FileList />
      </div>
      <div className="flex h-6 items-center pl-[14px] pr-[9px] text-[#33425e]">
        <span className="w-[54px] pb-[2px]">1 item</span>
        <span className="flex-1 pb-[2px]">1 item selected</span>
        <span className="w-[22px] h-6 bg-[#cbeef8] border border-[#35a5cf] flex items-center justify-center">
          <svg className="w-4 h-3" viewBox="0 0 16 12" fill="none" stroke="#777">
            <path d="M.500.500h3v11h-3zM0 4.200h4M0 7.800h4" />
            <path d="M6 2h4M12 2h4M6 6h4M12 6h4M6 10h4M12 10h4" />
          </svg>
        </span>
        <PictureIcon className="w-[14px] h-[11px] ml-1" />
      </div>
    </div>
  );
}

/* ---------- Taskbar ---------- */

function SearchArt() {
  return (
    <svg className="w-[78px] h-[38px] shrink-0" viewBox="0 0 78 38">
      <path d="M2 38Q8 28 18 27L32 11l9 6 8-3q10 6 15 12l12 12z" fill="#3d8a63" />
      <path d="M20 26L32 11l9 6-5 8-8 2z" fill="#7dbb8a" />
      <path d="M40 18l9-4q8 5 13 12l-12 3z" fill="#5fb09a" />
      <path d="M2 38q8-12 26-7l10 7z" fill="#255a43" />
      <path d="M36 38q-1-6 8-7l8 7z" fill="#f2b632" />
      <path d="M50 38q4-12 15-9l11 9z" fill="#17504c" />
      <path d="M19 26V10M16 12l3 4 4-4" stroke="#7a4a2b" strokeWidth="1.500" fill="none" />
      <circle cx="15" cy="7" r="4.500" fill="#e6b93c" />
      <circle cx="22" cy="7" r="5" fill="#c7b043" />
      <circle cx="19" cy="4" r="3" fill="#f0cc52" />
      <path d="M56 1l4 7h-2l4 6h-2l4 7H48l4-7h-2l4-6h-2z" fill="#23705a" />
      <path d="M56 20v8" stroke="#56371f" strokeWidth="1.600" />
      <path d="M68 18v13" stroke="#c96849" strokeWidth="1.500" />
      <circle cx="68" cy="19" r="3.500" fill="#f49a72" />
      <circle cx="64.500" cy="22" r="2.300" fill="#f7b491" />
      <circle cx="71.500" cy="22" r="2.300" fill="#ee8159" />
      <circle cx="15" cy="19" r="2.500" fill="#cf6f55" />
      <circle cx="31" cy="24" r="2.600" fill="#e2664c" />
      <circle cx="28" cy="27" r="2" fill="#f28b66" />
      <path d="M5 31l-1-8 6 5 2-5 4 9z" fill="#a9b93f" />
    </svg>
  );
}

function TaskButton({ children, active, open }: { children: ReactNode; active?: boolean; open?: boolean }) {
  return (
    <div className={`flex flex-col items-center justify-end h-10 w-[49px] ${active ? "bg-[#35444d]" : ""}`}>
      <div className="flex-1 flex items-center">{children}</div>
      {active && <div className="w-full h-[2px] bg-[#7ab8ec]" />}
      {open && <div className="w-10 h-[2px] bg-[#7ab8ec]" />}
    </div>
  );
}

function Taskbar() {
  return (
    <div className="absolute left-0 bottom-0 w-[1280px] h-10 bg-gradient-to-r from-[#03171f] via-[#03131d] to-[#020818] flex items-center">
      <div className="w-12 flex justify-center">
        <svg className="w-4 h-4" viewBox="0 0 16 16" fill="#fff">
          <path d="M0 2.300l6.700-1v6.300H0zM7.400 1.200L16 0v7.600H7.400zM0 8.300h6.700v6.400l-6.700-1zM7.400 8.300H16V16l-8.600-1.200z" />
        </svg>
      </div>
      <div className="w-[288px] h-10 bg-[#f1f1f1] border border-[#cfcfcf] flex items-center pl-[11px]">
        <svg className="w-[17px] h-[17px]" viewBox="0 0 17 17" fill="none" stroke="#222" strokeWidth="1.300">
          <circle cx="10.500" cy="6.300" r="5.400" />
          <path d="M6.700 10.200L.700 16.300" />
        </svg>
        <span className="ml-[11px] flex-1 text-[15px] text-[#444] tracking-[-0.53px]">Type here to search</span>
        <SearchArt />
      </div>
      <div className="w-[50px] flex justify-center">
        <svg className="w-[17px] h-4 -ml-px" viewBox="0 0 17 16" fill="none" stroke="#f0f0f0">
          <path d="M.500 0v2.500h10V0M.500 5.500h10v5h-10zM.500 16v-2.500h10V16M14.500 0v5M14.500 8v8" />
          <path d="M13 5h3v3h-3z" fill="#f0f0f0" />
        </svg>
      </div>
      <TaskButton><EdgeLogo className="w-[25px] h-[25px]" /></TaskButton>
      <TaskButton active>
        <svg className="w-[22px] h-[19px]" viewBox="0 0 22 19">
          <path d="M0 1q0-1 1-1h6l2 2h12q1 0 1 1v4H0z" fill="#e7a11a" />
          <path d="M0 4h22v13H0z" fill="#ffd567" />
          <path d="M4 19v-8q0-1 1-1h12q1 0 1 1v8h-4v-4H8v4z" fill="#3a8ad0" />
        </svg>
      </TaskButton>
      <TaskButton><FirefoxLogo className="w-6 h-6" /></TaskButton>
      <TaskButton open>
        <svg className="w-[21px] h-4" viewBox="0 0 21 16">
          <rect x=".500" y=".500" width="20" height="15" fill="#63bbef" stroke="#b6e0f8" />
          <circle cx="6.500" cy="6.500" r="3.500" fill="#fff" />
          <path d="M6.500 6.500V3A3.500 3.500 0 0 1 10 6.500z" fill="#1b5b9c" />
          <path d="M12 5h6M12 8h6M12 11h6M3 12.500h7" stroke="#155d9e" strokeWidth="1.400" />
        </svg>
      </TaskButton>
      <TaskButton open>
        <svg className="w-[24px] h-[22px]" viewBox="0 0 24 22">
          <path d="M4 3l14-2 4 2v12l-14 3-7-2z" fill="#ccd2d6" />
          <path d="M6 4l15-2v12L7 16z" fill="#f3f6f7" stroke="#83909a" strokeWidth=".700" />
          <path d="M8 11l2-1 2-5 2 7 2-6 2 3 2-1" stroke="#4a7c90" fill="none" />
          <path d="M11 16l5-1v3l3 2-8 1-3-2 3-1z" fill="#a7b0b5" />
        </svg>
      </TaskButton>
      <TaskButton open><Books className="w-6 h-6" /></TaskButton>
      <div className="flex-1" />
      <svg className="w-[90px] h-[18px]" viewBox="0 0 90 18" fill="none" stroke="#f0f0f0" strokeWidth="1.200">
        <path d="M1.500 12l5.500-5.500 5.500 5.500" />
        <path d="M26.500 6h6.500v7h-6.500zM33 8.500l3-2v6l-3-2M26.500 3q4.500-3 9 0M26.500 15.500q4.500 3 9 0" />
        <path d="M51.500 5h11.500v8H51M56.500 13v3M53 16.500h8M47.500 3.500h5v3.500h-5zM50 7v7" />
        <path d="M71 7v4.500h2.500L77 15V3.500L73.500 7zM79.500 7q1.500 2.300 0 4.500M82 5q3 4.500 0 8.500M84.500 3.500q4 5.800 0 11.500" />
      </svg>
      <div className="w-[66px] flex flex-col items-center text-white leading-[18px] tracking-[-0.35px]">
        <span>4:11 PM</span>
        <span>5/14/2025</span>
      </div>
      <svg className="w-[17px] h-4 mt-[2px] ml-[10px] mr-[20px]" viewBox="0 0 17 16" fill="none" stroke="#f0f0f0" strokeWidth="1.200">
        <path d="M.700.700h15.600v11.500h-5.500l-2.300 2.500-2.300-2.500H.7z" />
      </svg>
      <div className="w-px h-10 bg-[#4c5669] mr-1" />
    </div>
  );
}

function Watermark() {
  return (
    <svg className="absolute left-[1036px] top-[606px] w-[200px] h-[70px]" viewBox="0 0 200 70" fill="#a3bfea" fillOpacity=".75">
      <text x="3" y="53" fontSize="52" fontFamily="Roboto" textLength="63" lengthAdjust="spacingAndGlyphs">ANY</text>
      <text x="134" y="53" fontSize="52" fontFamily="Roboto" textLength="62" lengthAdjust="spacingAndGlyphs">RUN</text>
      <g fill="none" stroke="#a3bfea" strokeOpacity=".75" strokeWidth="3.200" strokeLinejoin="round" strokeLinecap="round">
        <path d="M80 12q-4-1-4 4v39q0 5 5 2l42-23-31-18v30" />
        <path d="M86 46V9q0-5 5-2l34 20q5 3 3 6" />
        <path d="M85 61q1 5 6 3l35-21q4-3 2-7l-5-2" />
        <path d="M92 58l22-13" />
      </g>
    </svg>
  );
}

export default function App() {
  return (
    <div className="relative w-[1280px] h-[720px] overflow-hidden font-['Open_Sans','Noto_Sans',sans-serif] text-[11.5px] leading-[15px] tracking-[-0.15px] text-black bg-[linear-gradient(76deg,#00b2ff_0%,#00adff_18%,#009cf6_38%,#007ee8_54%,#0062dc_68%,#004ed0_80%,#0044c4_90%,#003ab2_100%)]">
      <DesktopIcons />
      <PersonalizationWindow />
      <TaskManagerWindow />
      <WinRarWindow />
      <ExplorerWindow />
      <Taskbar />
      <Watermark />
    </div>
  );
}
